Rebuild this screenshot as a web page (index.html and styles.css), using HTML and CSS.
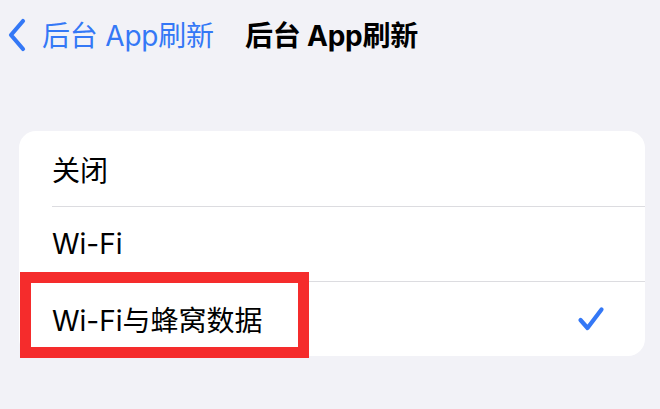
FILE: index.html
```html
<!DOCTYPE html>
<html lang="zh">
<head>
<meta charset="utf-8">
<link rel="stylesheet" href="styles.css">
</head>
<body>
<div class="page">
  <header class="nav">
    <a class="back">
      <svg class="chev" width="20" height="34" viewBox="0 0 20 34"><path d="M16 3 L4 17 L16 31" fill="none" stroke="#3478f6" stroke-width="4.2" stroke-linecap="round" stroke-linejoin="round"/></svg>
      <span class="back-label">后台 App刷新</span>
    </a>
    <h1 class="title">后台 App刷新</h1>
  </header>
  <section class="card">
    <div class="row"><span class="label">关闭</span></div>
    <div class="row"><span class="label">Wi-Fi</span></div>
    <div class="row"><span class="label">Wi-Fi与蜂窝数据</span>
      <svg class="check" width="28" height="26" viewBox="0 0 28 26"><path d="M3.5 14 L10.5 22 L24.5 3.5" fill="none" stroke="#3478f6" stroke-width="4.2" stroke-linecap="round" stroke-linejoin="round"/></svg>
    </div>
    <div class="highlight"></div>
  </section>
</div>
</body>
</html>
```
FILE: styles.css
```css
html, body {
  margin: 0;
  padding: 0;
  background: #f2f2f7;
}
.page {
  width: 660px;
  height: 409px;
  overflow: hidden;
  font-family: Inter, "Noto Sans CJK SC", sans-serif;
}
.nav {
  height: 66px;
  display: flex;
  align-items: center;
  padding-left: 7px;
  padding-top: 2px;
  box-sizing: border-box;
}
.back {
  display: flex;
  align-items: center;
  color: #3478f6;
}
.chev {
  display: block;
  margin-right: 15px;
  margin-top: 2px;
}
.back-label {
  font-size: 28px;
  letter-spacing: -0.2px;
}
.title {
  margin: 0 0 0 31px;
  font-size: 28px;
  font-weight: 700;
  color: #000;
  letter-spacing: -0.2px;
}
.card {
  position: relative;
  margin: 65px 15px 0 19px;
  background: #fff;
  border-radius: 17px;
}
.row {
  height: 75px;
  display: flex;
  align-items: center;
  justify-content: space-between;
  margin-left: 33px;
  padding-right: 40px;
  border-top: 1px solid #dcdce0;
  box-sizing: border-box;
}
.row:first-child {
  border-top: none;
}
.label {
  font-size: 28px;
  color: #000;
}
.check {
  display: block;
}
.highlight {
  position: absolute;
  left: 1px;
  top: 141px;
  width: 289px;
  height: 86px;
  border: 11px solid #f52c2c;
  box-sizing: border-box;
}
```
